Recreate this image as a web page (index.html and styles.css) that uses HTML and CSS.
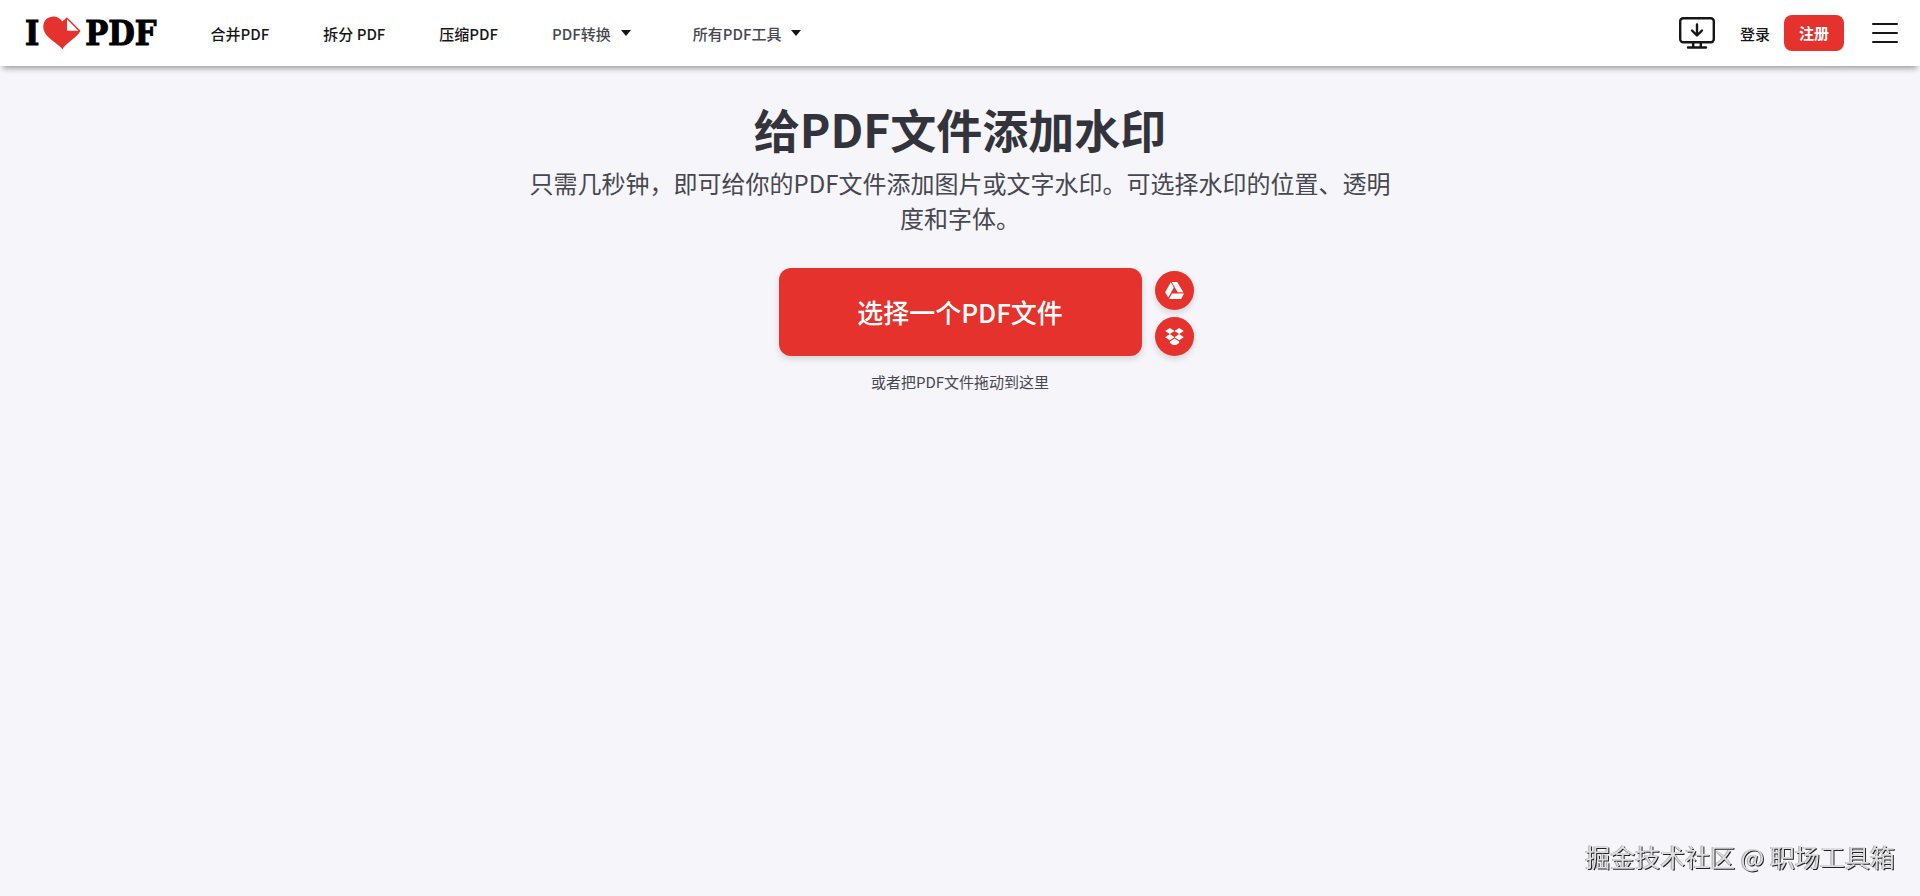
FILE: index.html
```html
<!DOCTYPE html>
<html lang="zh-CN">
<head>
  <meta charset="UTF-8">
  <meta name="viewport" content="width=device-width, initial-scale=1.0">
  <title>给PDF文件添加水印</title>
  <link rel="stylesheet" href="styles.css">
</head>
<body>
  <header class="header">
    <a href="#" class="brand" aria-label="I love PDF">
      <span>I</span>
      <svg class="brand__heart" viewBox="0 0 38 34" aria-hidden="true">
        <path fill="#e5322d" d="M19.500 33.500C17 28.500 2 22 .600 13.500C-1 5 4.500.500 10.500.500C14.500.500 17.500 2.500 19.200 5.500L24 1.200L37.500 14.800C35 21 21.500 28 19.500 33.500Z"/>
        <path fill="#fff" d="M24 3.300L35.300 14.800H24Z"/>
      </svg>
      <span>PDF</span>
    </a>
    <nav class="menu">
      <a href="#" class="menu__link">合并PDF</a>
      <a href="#" class="menu__link">拆分 PDF</a>
      <a href="#" class="menu__link">压缩PDF</a>
      <button type="button" class="menu__drop">PDF转换 <span class="caret"></span></button>
      <button type="button" class="menu__drop">所有PDF工具 <span class="caret"></span></button>
    </nav>
    <div class="actions">
      <a href="#" class="actions__desktop" aria-label="桌面版">
        <svg viewBox="0 0 36 32" fill="none" stroke="#161616" stroke-width="2.400" stroke-linecap="round" stroke-linejoin="round">
          <rect x="1.200" y="1.200" width="33.600" height="24" rx="3"/>
          <path d="M18 7.500V18M13 13.500L18 18.500L23 13.500M14.200 25.500V30M21.800 25.500V30M9 30.500H27"/>
        </svg>
      </a>
      <a href="#" class="actions__login">登录</a>
      <a href="#" class="actions__signup">注册</a>
      <button type="button" class="actions__menu" aria-label="菜单">
        <svg viewBox="0 0 26 20" stroke="#161616" stroke-width="2" stroke-linecap="round">
          <path d="M1 1H25M1 10H25M1 19H25"/>
        </svg>
      </button>
    </div>
  </header>

  <main class="tool">
    <h1 class="tool__title">给PDF文件添加水印</h1>
    <h2 class="tool__subtitle">只需几秒钟，即可给你的PDF文件添加图片或文字水印。可选择水印的位置、透明度和字体。</h2>

    <div class="uploader">
      <button type="button" class="uploader__btn">选择一个PDF文件</button>
      <div class="uploader__cloud">
        <button type="button" class="cloud-btn" aria-label="Google Drive">
          <svg viewBox="0 0 18 16" fill="#fff">
            <path d="M5.500.300L8.300 5.200L3.100 14.600L.100 9.600Z"/>
            <path d="M6.400 0H11.500L17.400 9.800H12Z"/>
            <path d="M6.600 10.900H18L15.300 16H3.900Z"/>
          </svg>
        </button>
        <button type="button" class="cloud-btn" aria-label="Dropbox">
          <svg viewBox="0 0 18 17" fill="#fff">
            <path d="M4.600 0L9 2.900L4.600 5.800L.200 2.900Z"/>
            <path d="M13.400 0L17.800 2.900L13.400 5.800L9 2.900Z"/>
            <path d="M4.600 5.800L9 8.700L4.600 11.600L.200 8.700Z"/>
            <path d="M13.400 5.800L17.800 8.700L13.400 11.600L9 8.700Z"/>
            <path d="M4.600 12.800L9 9.900L13.400 12.800V14.100L9 17L4.600 14.100Z"/>
          </svg>
        </button>
      </div>
    </div>
    <p class="tool__hint">或者把PDF文件拖动到这里</p>
  </main>

  <p class="credit">掘金技术社区 @ 职场工具箱</p>
</body>
</html>
```
FILE: styles.css
```css
:root {
  --red: #e5322d;
  --bg: #f5f5fa;
  --black: #161616;
  --title: #33333b;
  --text: #47474f;
}

* {
  box-sizing: border-box;
}

body {
  margin: 0;
  min-height: 100vh;
  font-family: "Noto Sans CJK SC", "Noto Sans", sans-serif;
  font-size: 15px;
  color: var(--text);
  background: var(--bg);
}

a {
  color: var(--black);
  text-decoration: none;
}

button {
  border: 0;
  padding: 0;
  font: inherit;
  background: none;
  cursor: pointer;
}

svg {
  display: block;
}

/* Header */
.header {
  display: flex;
  align-items: center;
  height: 66px;
  padding: 0 22px 0 25px;
  background: #fff;
  box-shadow: 0 5px 6px -3px rgba(0, 0, 0, 0.4);
}

.brand {
  display: flex;
  align-items: center;
  gap: 4px;
  margin-right: 54px;
  font-family: "DejaVu Serif Condensed", "DejaVu Serif", serif;
  font-stretch: condensed;
  font-size: 34px;
  font-weight: bold;
  line-height: 40px;
  color: #000;
  -webkit-text-stroke: 1px #000;
}

.brand__heart {
  width: 38px;
  height: 34px;
}

.menu {
  display: flex;
  align-items: center;
  gap: 54px;
}

.menu__link {
  font-weight: 500;
}

.menu__drop {
  display: flex;
  align-items: center;
  gap: 10px;
  margin-right: 8px;
  color: var(--text);
  font-weight: 500;
}

.caret {
  border: 5px solid transparent;
  border-top: 6px solid var(--black);
  border-bottom: 0;
}

.actions {
  display: flex;
  align-items: center;
  margin-left: auto;
}

.actions__desktop {
  width: 36px;
  margin-right: 25px;
}

.actions__login {
  margin-right: 14px;
  font-weight: 500;
}

.actions__signup {
  padding: 0 15px;
  border-radius: 8px;
  background: var(--red);
  color: #fff;
  font-weight: bold;
  line-height: 36px;
}

.actions__menu {
  width: 26px;
  margin-left: 28px;
}

/* Tool */
.tool {
  display: flex;
  flex-direction: column;
  align-items: center;
  padding: 34px 20px;
  text-align: center;
}

.tool__title {
  margin: 0;
  font-size: 46px;
  font-weight: bold;
  line-height: 56px;
  color: var(--title);
}

.tool__subtitle {
  max-width: 880px;
  margin: 9px 0 33px;
  font-size: 24px;
  font-weight: 400;
  line-height: 35px;
}

.uploader {
  display: grid;
  grid-template-columns: 1fr auto 1fr;
  align-items: end;
  gap: 13px;
  width: 100%;
}

.uploader__btn {
  grid-column: 2;
  min-width: 363px;
  padding: 24px 48px;
  border-radius: 12px;
  background: var(--red);
  box-shadow: 0 3px 6px rgba(0, 0, 0, 0.14);
  color: #fff;
  font-size: 26px;
  font-weight: 500;
  line-height: 40px;
}

.uploader__cloud {
  display: flex;
  flex-direction: column;
  gap: 7px;
}

.cloud-btn {
  display: flex;
  align-items: center;
  justify-content: center;
  width: 39px;
  height: 39px;
  border-radius: 50%;
  background: var(--red);
  box-shadow: 0 3px 6px rgba(0, 0, 0, 0.14);
}

.cloud-btn svg {
  width: 19px;
}

.tool__hint {
  margin: 14px 0 0;
  line-height: 24px;
}

.credit {
  position: fixed;
  right: 25px;
  bottom: 22px;
  margin: 0;
  color: #dedee2;
  font-size: 25px;
  line-height: 36px;
  text-shadow: 1px 1px 0 #222, -1px 0 0 #aaa;
}
```
